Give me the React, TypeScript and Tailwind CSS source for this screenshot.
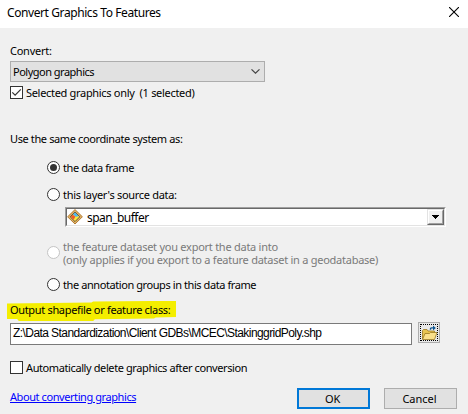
import type { ReactNode } from "react";

function Radio({ checked = false, disabled = false }: { checked?: boolean; disabled?: boolean }) {
  return (
    <span
      className={`flex size-[13px] shrink-0 items-center justify-center rounded-full border bg-white ${
        disabled ? "border-[#c4c4c4]" : "border-[#333333]"
      }`}
    >
      {checked && <span className="size-[7px] rounded-full bg-[#333333]" />}
    </span>
  );
}

function Checkbox({ checked = false }: { checked?: boolean }) {
  return (
    <span className="block size-[13px] shrink-0 border border-[#333333] bg-white">
      {checked && (
        <svg viewBox="0 0 11 11" className="block size-[11px]" fill="none" stroke="#333" strokeWidth="1.2">
          <path d="M1.3 5.4 4.1 8.2 9.8 2.4" />
        </svg>
      )}
    </span>
  );
}

function Row({ children, className }: { children: ReactNode; className: string }) {
  return <div className={`flex shrink-0 whitespace-pre leading-[13px] ${className}`}>{children}</div>;
}

function LayerIcon() {
  return (
    <svg viewBox="0 0 16 16" className="size-4 shrink-0">
      <path d="M8 .6 15.4 7.8 8 15 .6 7.8Z" fill="#e4b264" stroke="#b07c38" strokeWidth="1" />
      <path d="M8 3 12.8 7.8 8 12.6 3.2 7.8Z" fill="#fce83c" stroke="#5a4834" strokeWidth=".9" />
      <path d="M8 3.6 11.6 7.2 8.8 7.8 6 5.6Z" fill="#4cb4f4" />
      <path d="M5.8 5.8 8.4 7.8 6.6 10.8 3.7 7.8Z" fill="#f05a28" />
    </svg>
  );
}

function FolderIcon() {
  return (
    <svg viewBox="0 0 17 16" className="h-4 w-[17px] shrink-0">
      <path d="M1.5 14V5.5l1-1h3.5l1 1.5h6.5v2" fill="#e8c450" stroke="#9a7820" strokeWidth=".8" />
      <path d="M1.5 14.5 4 8.5h4.5l1-1H16l-2.5 7Z" fill="#fae08a" stroke="#9a7820" strokeWidth=".8" />
      <path d="M9.5 4.8V3.9q0-1 1-1h2" fill="none" stroke="#0c5490" strokeWidth="1.4" />
      <path d="M12 .4 14.8 3 12 5.6Z" fill="#0c5490" />
    </svg>
  );
}

export default function App() {
  return (
    <main className="flex h-[414px] w-[468px] flex-col overflow-hidden bg-[#f0f0f0] font-['Noto_Sans',sans-serif] text-[11px] text-black">
      <header className="flex h-7 shrink-0 justify-between bg-white pt-1 pr-[9px] pl-[7px] text-[12px] leading-[18px]">
        <h1 className="whitespace-pre tracking-[-0.41px]">Convert Graphics To Features</h1>
        <svg viewBox="0 0 10 10" className="mt-[3px] size-[10px]" stroke="#000" strokeWidth="1.1">
          <path d="M0 0 10 10M10 0 0 10" />
        </svg>
      </header>

      <Row className="mt-4 h-[17px] pl-[10px] tracking-[-0.25px]"><span>Convert:</span></Row>
      <div className="ml-[10px] flex h-[21px] w-[255px] shrink-0 items-center justify-between border border-[#adadad] bg-[#e1e1e1] pr-1 pl-[2px] leading-[13px]">
        <span className="tracking-[-0.5px]">Polygon graphics</span>
        <svg viewBox="0 0 9 5" className="h-[5px] w-[9px]" fill="none" stroke="#444" strokeWidth="1.2">
          <path d="M.5 .4 4.5 4.2 8.5 .4" />
        </svg>
      </div>
      <Row className="mt-1 h-[13px] gap-[3px] pl-[10px] tracking-[-0.31px]">
        <Checkbox checked />
        <span>Selected graphics only  (1 selected)</span>
      </Row>

      <Row className="mt-[33px] h-[14px] pl-[10px] tracking-[-0.38px]"><span>Use the same coordinate system as:</span></Row>
      <Row className="mt-[15px] h-[13px] gap-[3px] pl-[47px] tracking-[-0.4px]">
        <Radio checked />
        <span>the data frame</span>
      </Row>
      <Row className="mt-[14px] h-[13px] gap-[3px] pl-[47px] tracking-[-0.3px]">
        <Radio />
        <span>this layer's source data:</span>
      </Row>
      <div className="mt-[6px] ml-[65px] h-5 w-[381px] shrink-0 border border-t-[#a0a0a0] border-r-white border-b-white border-l-[#a0a0a0]">
        <div className="flex h-[18px] border border-t-[#696969] border-r-[#e3e3e3] border-b-[#e3e3e3] border-l-[#696969] bg-white">
          <LayerIcon />
          <span className="ml-1 grow text-[12px] leading-[17px] tracking-[-0.52px]">span_buffer</span>
          <span className="h-4 w-[17px] border border-t-[#e3e3e3] border-r-[#696969] border-b-[#696969] border-l-[#e3e3e3]">
            <span className="flex h-[14px] items-center justify-center border border-t-white border-r-[#a0a0a0] border-b-[#a0a0a0] border-l-white bg-[#f0f0f0]">
              <svg viewBox="0 0 7 4" className="h-1 w-[7px]" shapeRendering="crispEdges">
                <path d="M0 0h7L3.5 4Z" />
              </svg>
            </span>
          </span>
        </div>
      </div>
      <Row className="mt-[13px] h-[27px] gap-[3px] pl-[47px] text-[#7a7a7a]">
        <span className="mt-[6px]"><Radio disabled /></span>
        <div className="flex flex-col items-start tracking-[-0.255px]">
          <span>the feature dataset you export the data into</span>
          <span>(only applies if you export to a feature dataset in a geodatabase)</span>
        </div>
      </Row>
      <Row className="mt-[11px] h-[13px] gap-[3px] pl-[47px] tracking-[-0.42px]">
        <Radio />
        <span>the annotation groups in this data frame</span>
      </Row>

      <div className="mt-[10px] ml-[7px] h-5 w-[169px] shrink-0 whitespace-pre bg-[#f4ee00] pt-[2px] pl-[3px] leading-[13px] [clip-path:polygon(0_12%,50%_8%,51%_3%,85%_0,100%_0,100%_80%,88%_82%,87%_88%,52%_91%,51%_100%,7%_100%,6%_90%,0_90%)]">
        <span className="tracking-[-0.33px]">Output shapefile or feature class:</span>
      </div>
      <div className="mt-[1px] flex h-[23px] shrink-0 gap-[6px] pl-[10px]">
        <div className="mt-[1px] flex h-[22px] w-[402px] items-center whitespace-pre border border-[#7a7a7a] bg-white pb-[2px] pl-[2px] font-['Liberation_Sans',sans-serif] text-[12px] leading-[14px]">
          <span className="tracking-[-0.57px]">Z:\Data Standardization\Client GDBs\MCEC\StakinggridPoly.shp</span>
        </div>
        <div className="h-[21px] w-[22px] border border-[#adadad] bg-[#e9e9e9] p-px">
          <div className="flex h-[17px] w-[18px] items-center justify-center border border-dotted border-black">
            <FolderIcon />
          </div>
        </div>
      </div>

      <Row className="mt-4 h-[13px] gap-[3px] pl-[10px] tracking-[-0.4px]">
        <Checkbox />
        <span>Automatically delete graphics after conversion</span>
      </Row>
      <footer className="mt-[14px] flex h-[21px] shrink-0 items-start pl-[10px] leading-[13px]">
        <div className="mt-[2px] w-[287px] whitespace-pre">
          <a className="tracking-[-0.42px] text-[#0000ff] underline">About converting graphics</a>
        </div>
        <div className="flex h-[21px] w-[73px] items-center justify-center border-2 border-[#0078d7] bg-[#e1e1e1] pr-[2px] tracking-[-0.3px]">OK</div>
        <div className="ml-[14px] flex h-[21px] w-[73px] items-center justify-center border border-[#adadad] bg-[#e1e1e1] pr-[2px]">Cancel</div>
      </footer>
    </main>
  );
}
